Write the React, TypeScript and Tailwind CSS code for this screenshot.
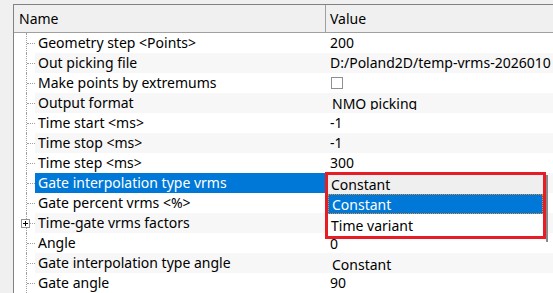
import React from 'react';

type Row = {
  name: string;
  value?: React.ReactNode;
  expandable?: boolean;
  selected?: boolean;
};

const font = { fontFamily: '"Noto Sans", "Open Sans", sans-serif' };

function Checkbox() {
  return <div className="mt-[4px] ml-[1px] h-[12px] w-[12px] border border-[#8f8f8f] bg-white" />;
}

// values under the open dropdown are left blank, the editor covers them
const rows: Row[] = [
  { name: 'Geometry step <Points>', value: '200' },
  { name: 'Out picking file', value: 'D:/Poland2D/temp-vrms-2026010' },
  { name: 'Make points by extremums', value: <Checkbox /> },
  {
    name: 'Output format',
    value: (
      <div className="mt-[1px] h-[16px] overflow-hidden pl-[2px] leading-[20px]">NMO picking</div>
    ),
  },
  { name: 'Time start <ms>', value: '-1' },
  { name: 'Time stop <ms>', value: '-1' },
  { name: 'Time step <ms>', value: '300' },
  { name: 'Gate interpolation type vrms', selected: true },
  { name: 'Gate percent vrms <%>' },
  { name: 'Time-gate vrms factors', expandable: true },
  { name: 'Angle', value: <div className="pt-[2px] leading-[18px]">0</div> },
  {
    name: 'Gate interpolation type angle',
    value: <div className="pt-[4px] pl-[2px] leading-[16px]">Constant</div>,
  },
  { name: 'Gate angle', value: '90' },
];

function TreeGuide({ expandable }: { expandable?: boolean }) {
  return (
    <div className="relative h-full w-[21px] shrink-0 bg-white">
      <div className="absolute left-[12px] top-0 h-full border-l border-dotted border-[#a0a0a0]" />
      {expandable ? (
        <>
          <div className="absolute left-[7px] top-[6px] flex h-[9px] w-[9px] items-center justify-center border border-[#919191] bg-white">
            <div className="relative h-[5px] w-[5px]">
              <div className="absolute left-0 top-[2px] h-[1px] w-[5px] bg-black" />
              <div className="absolute left-[2px] top-0 h-[5px] w-[1px] bg-black" />
            </div>
          </div>
          <div className="absolute left-[16px] top-[10px] w-[5px] border-t border-dotted border-[#a0a0a0]" />
        </>
      ) : (
        <div className="absolute left-[13px] top-[10px] w-[8px] border-t border-dotted border-[#a0a0a0]" />
      )}
    </div>
  );
}

export default function App() {
  return (
    <div
      className="relative h-[293px] w-[553px] overflow-hidden bg-[#f0f0f0] pl-[13px] pt-[4px] text-[14px] text-black"
      style={font}
    >
      <div className="flex h-[320px] w-[600px] flex-col border-l border-t border-[#828282] bg-white">
        <div className="flex h-[28px] shrink-0 border-b border-[#a0a0a0] bg-[#f0f0f0]">
          <div className="flex w-[312px] items-center border-r border-[#a0a0a0] pl-[5px]">Name</div>
          <div className="flex flex-1 items-center pl-[4px]">Value</div>
        </div>

        {rows.map((row, index) => {
          const shaded = index % 2 === 1;
          return (
            <div
              key={row.name}
              className={`flex h-[20px] shrink-0 leading-[20px] ${shaded ? 'bg-[#f7f7f7]' : 'bg-white'}`}
            >
              <TreeGuide expandable={row.expandable} />
              <div
                className={`w-[291px] shrink-0 whitespace-nowrap pl-[3px] ${
                  row.selected ? 'bg-[#0078d7] text-white' : ''
                }`}
              >
                {row.name}
              </div>
              <div className="flex-1 overflow-hidden whitespace-nowrap pl-[4px]">{row.value}</div>
            </div>
          );
        })}
      </div>

      <div className="absolute left-[325px] top-[172px] flex">
        <div className="flex h-[67px] w-[221px] flex-col border-[3px] border-[#e81c24] bg-white">
          <div className="h-[19px] shrink-0 bg-[#efefef] pl-[3px] leading-[19px]">Constant</div>
          <div className="h-[20px] shrink-0 border border-dotted border-[#f08a24] bg-[#0078d7] pl-[3px] leading-[19px] text-white">
            Constant
          </div>
          <div className="h-[22px] shrink-0 pl-[3px] pt-[2px] leading-[20px]">Time variant</div>
        </div>
        <div className="mt-[3px] h-[67px] w-[2px] bg-[#8a8a8a]" />
      </div>
    </div>
  );
}
